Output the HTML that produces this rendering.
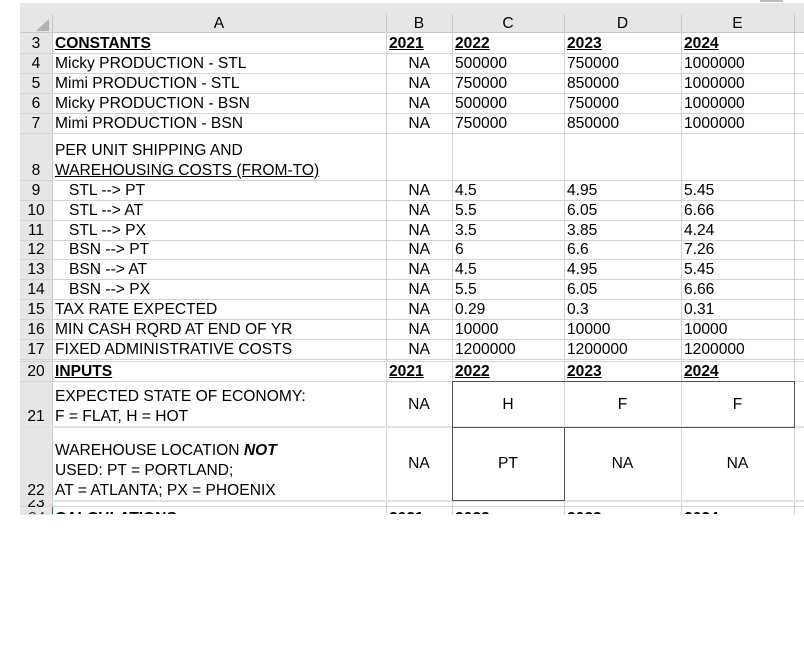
<!DOCTYPE html>
<html><head><meta charset="utf-8"><style>
*{margin:0;padding:0;box-sizing:border-box}
body{width:804px;height:648px;background:#fff;position:relative;overflow:hidden;font-family:"Liberation Sans",Arial,sans-serif;font-size:15.6px;color:#000}
div{position:absolute}
.t{white-space:nowrap;line-height:17px}
.h{background:#d4d4d4}
.rn{left:20px;width:32px;text-align:center;line-height:17px}
.b{font-weight:bold;text-decoration:underline}
.r{text-align:right;width:60px}
.hd{text-align:center;top:15px;line-height:17px}
</style></head><body>
<div style="left:760px;top:0;width:23px;height:2px;background:#bdbdbd"></div>
<div style="left:20px;top:3px;width:784px;height:30px;background:#e6e6e6"></div>
<div style="left:20px;top:33px;width:32px;height:482px;background:#e6e6e6"></div>
<svg style="position:absolute;left:36px;top:19px" width="14" height="13"><polygon points="13,0 13,12 0,12" fill="#b4b4b4"/></svg>
<div style="left:52px;top:14px;width:1px;height:19px;background:#c8c8c8"></div>
<div style="left:386px;top:14px;width:1px;height:19px;background:#c8c8c8"></div>
<div style="left:452px;top:14px;width:1px;height:19px;background:#c8c8c8"></div>
<div style="left:564px;top:14px;width:1px;height:19px;background:#c8c8c8"></div>
<div style="left:681px;top:14px;width:1px;height:19px;background:#c8c8c8"></div>
<div style="left:794px;top:14px;width:1px;height:19px;background:#c8c8c8"></div>
<div style="left:20px;top:32px;width:784px;height:1px;background:#c8c8c8"></div>
<div class="hd" style="left:52px;width:334px">A</div>
<div class="hd" style="left:386px;width:66px">B</div>
<div class="hd" style="left:452px;width:112px">C</div>
<div class="hd" style="left:564px;width:117px">D</div>
<div class="hd" style="left:681px;width:113px">E</div>
<div class="h" style="left:52px;top:33px;width:1px;height:482px;background:#c8c8c8"></div>
<div class="h" style="left:386px;top:33px;width:1px;height:482px"></div>
<div class="h" style="left:452px;top:33px;width:1px;height:482px"></div>
<div class="h" style="left:564px;top:33px;width:1px;height:482px"></div>
<div class="h" style="left:681px;top:33px;width:1px;height:482px"></div>
<div class="h" style="left:794px;top:33px;width:1px;height:482px"></div>
<div class="h" style="left:20px;top:53px;width:784px;height:1px"></div>
<div class="h" style="left:20px;top:73px;width:784px;height:1px"></div>
<div class="h" style="left:20px;top:93px;width:784px;height:1px"></div>
<div class="h" style="left:20px;top:113px;width:784px;height:1px"></div>
<div class="h" style="left:20px;top:133px;width:784px;height:1px"></div>
<div class="h" style="left:20px;top:180px;width:784px;height:1px"></div>
<div class="h" style="left:20px;top:200px;width:784px;height:1px"></div>
<div class="h" style="left:20px;top:220px;width:784px;height:1px"></div>
<div class="h" style="left:20px;top:240px;width:784px;height:1px"></div>
<div class="h" style="left:20px;top:259px;width:784px;height:1px"></div>
<div class="h" style="left:20px;top:279px;width:784px;height:1px"></div>
<div class="h" style="left:20px;top:299px;width:784px;height:1px"></div>
<div class="h" style="left:20px;top:319px;width:784px;height:1px"></div>
<div class="h" style="left:20px;top:339px;width:784px;height:1px"></div>
<div class="h" style="left:20px;top:359px;width:784px;height:1px"></div>
<div class="h" style="left:20px;top:361px;width:784px;height:1px"></div>
<div class="h" style="left:20px;top:381px;width:784px;height:1px"></div>
<div class="h" style="left:20px;top:426px;width:784px;height:2px;background:#e2e2e2"></div>
<div class="h" style="left:20px;top:500px;width:784px;height:2px;background:#e2e2e2"></div>
<div class="h" style="left:20px;top:506px;width:784px;height:1px"></div>
<div style="left:452px;top:381px;width:343px;height:47px;border:1px solid #555"></div>
<div style="left:452px;top:427px;width:113px;height:74px;border:1px solid #555"></div>

<div class="rn t" style="top:35px">3</div>
<div class="rn t" style="top:55px">4</div>
<div class="rn t" style="top:75px">5</div>
<div class="rn t" style="top:95px">6</div>
<div class="rn t" style="top:115px">7</div>
<div class="rn t" style="top:162px">8</div>
<div class="rn t" style="top:182px">9</div>
<div class="rn t" style="top:202px">10</div>
<div class="rn t" style="top:222px">11</div>
<div class="rn t" style="top:241px">12</div>
<div class="rn t" style="top:261px">13</div>
<div class="rn t" style="top:281px">14</div>
<div class="rn t" style="top:301px">15</div>
<div class="rn t" style="top:321px">16</div>
<div class="rn t" style="top:341px">17</div>
<div class="rn t" style="top:363px">20</div>
<div class="rn t" style="top:408px">21</div>
<div class="rn t" style="top:482px">22</div>
<div style="left:20px;top:500px;width:32px;height:7px;overflow:hidden"><div class="rn t" style="left:0;top:-6px">23</div></div>

<div class="t b" style="left:55px;top:35px">CONSTANTS</div>
<div class="t" style="left:55px;top:55px">Micky PRODUCTION - STL</div>
<div class="t" style="left:55px;top:75px">Mimi PRODUCTION - STL</div>
<div class="t" style="left:55px;top:95px">Micky PRODUCTION - BSN</div>
<div class="t" style="left:55px;top:115px">Mimi PRODUCTION - BSN</div>
<div class="t" style="left:55px;top:142px">PER UNIT SHIPPING AND</div>
<div class="t" style="left:55px;top:162px;text-decoration:underline">WAREHOUSING COSTS (FROM-TO)</div>
<div class="t" style="left:69px;top:182px">STL --&gt; PT</div>
<div class="t" style="left:69px;top:202px">STL --&gt; AT</div>
<div class="t" style="left:69px;top:222px">STL --&gt; PX</div>
<div class="t" style="left:69px;top:241px">BSN --&gt; PT</div>
<div class="t" style="left:69px;top:261px">BSN --&gt; AT</div>
<div class="t" style="left:69px;top:281px">BSN --&gt; PX</div>
<div class="t" style="left:55px;top:301px">TAX RATE EXPECTED</div>
<div class="t" style="left:55px;top:321px">MIN CASH RQRD AT END OF YR</div>
<div class="t" style="left:55px;top:341px">FIXED ADMINISTRATIVE COSTS</div>
<div class="t b" style="left:55px;top:363px">INPUTS</div>
<div class="t" style="left:55px;top:388px">EXPECTED STATE OF ECONOMY:</div>
<div class="t" style="left:55px;top:408px">F = FLAT, H = HOT</div>
<div class="t" style="left:55px;top:442px">WAREHOUSE LOCATION <b><i>NOT</i></b></div>
<div class="t" style="left:55px;top:462px">USED: PT = PORTLAND;</div>
<div class="t" style="left:55px;top:482px">AT = ATLANTA; PX = PHOENIX</div>

<div class="t b" style="left:389px;top:35px">2021</div>
<div class="t b" style="left:455px;top:35px">2022</div>
<div class="t b" style="left:567px;top:35px">2023</div>
<div class="t b" style="left:684px;top:35px">2024</div>
<div class="t b" style="left:389px;top:363px">2021</div>
<div class="t b" style="left:455px;top:363px">2022</div>
<div class="t b" style="left:567px;top:363px">2023</div>
<div class="t b" style="left:684px;top:363px">2024</div>

<div class="t r" style="left:370px;top:55px">NA</div>
<div class="t r" style="left:370px;top:75px">NA</div>
<div class="t r" style="left:370px;top:95px">NA</div>
<div class="t r" style="left:370px;top:115px">NA</div>
<div class="t r" style="left:370px;top:182px">NA</div>
<div class="t r" style="left:370px;top:202px">NA</div>
<div class="t r" style="left:370px;top:222px">NA</div>
<div class="t r" style="left:370px;top:241px">NA</div>
<div class="t r" style="left:370px;top:261px">NA</div>
<div class="t r" style="left:370px;top:281px">NA</div>
<div class="t r" style="left:370px;top:301px">NA</div>
<div class="t r" style="left:370px;top:321px">NA</div>
<div class="t r" style="left:370px;top:341px">NA</div>
<div class="t" style="left:386px;width:66px;text-align:center;top:396px">NA</div>
<div class="t" style="left:386px;width:66px;text-align:center;top:455px">NA</div>

<div class="t" style="left:455px;top:55px">500000</div>
<div class="t" style="left:455px;top:75px">750000</div>
<div class="t" style="left:455px;top:95px">500000</div>
<div class="t" style="left:455px;top:115px">750000</div>
<div class="t" style="left:455px;top:182px">4.5</div>
<div class="t" style="left:455px;top:202px">5.5</div>
<div class="t" style="left:455px;top:222px">3.5</div>
<div class="t" style="left:455px;top:241px">6</div>
<div class="t" style="left:455px;top:261px">4.5</div>
<div class="t" style="left:455px;top:281px">5.5</div>
<div class="t" style="left:455px;top:301px">0.29</div>
<div class="t" style="left:455px;top:321px">10000</div>
<div class="t" style="left:455px;top:341px">1200000</div>
<div class="t" style="left:452px;width:112px;text-align:center;top:396px">H</div>
<div class="t" style="left:452px;width:112px;text-align:center;top:455px">PT</div>

<div class="t" style="left:567px;top:55px">750000</div>
<div class="t" style="left:567px;top:75px">850000</div>
<div class="t" style="left:567px;top:95px">750000</div>
<div class="t" style="left:567px;top:115px">850000</div>
<div class="t" style="left:567px;top:182px">4.95</div>
<div class="t" style="left:567px;top:202px">6.05</div>
<div class="t" style="left:567px;top:222px">3.85</div>
<div class="t" style="left:567px;top:241px">6.6</div>
<div class="t" style="left:567px;top:261px">4.95</div>
<div class="t" style="left:567px;top:281px">6.05</div>
<div class="t" style="left:567px;top:301px">0.3</div>
<div class="t" style="left:567px;top:321px">10000</div>
<div class="t" style="left:567px;top:341px">1200000</div>
<div class="t" style="left:564px;width:117px;text-align:center;top:396px">F</div>
<div class="t" style="left:564px;width:117px;text-align:center;top:455px">NA</div>

<div class="t" style="left:684px;top:55px">1000000</div>
<div class="t" style="left:684px;top:75px">1000000</div>
<div class="t" style="left:684px;top:95px">1000000</div>
<div class="t" style="left:684px;top:115px">1000000</div>
<div class="t" style="left:684px;top:182px">5.45</div>
<div class="t" style="left:684px;top:202px">6.66</div>
<div class="t" style="left:684px;top:222px">4.24</div>
<div class="t" style="left:684px;top:241px">7.26</div>
<div class="t" style="left:684px;top:261px">5.45</div>
<div class="t" style="left:684px;top:281px">6.66</div>
<div class="t" style="left:684px;top:301px">0.31</div>
<div class="t" style="left:684px;top:321px">10000</div>
<div class="t" style="left:684px;top:341px">1200000</div>
<div class="t" style="left:681px;width:113px;text-align:center;top:396px">F</div>
<div class="t" style="left:681px;width:113px;text-align:center;top:455px">NA</div>

<div style="left:20px;top:507px;width:784px;height:7px;overflow:hidden">
<div class="t" style="left:8px;top:3px;color:#333">24</div>
<div style="left:32px;top:0;width:1px;height:7px;background:#217346"></div>
<div class="t" style="left:35px;top:3px;font-weight:bold">CALCULATIONS</div>
<div class="t" style="left:369px;top:3px;font-weight:bold">2021</div>
<div class="t" style="left:435px;top:3px;font-weight:bold">2022</div>
<div class="t" style="left:547px;top:3px;font-weight:bold">2023</div>
<div class="t" style="left:664px;top:3px;font-weight:bold">2024</div>
</div>
</body></html>
